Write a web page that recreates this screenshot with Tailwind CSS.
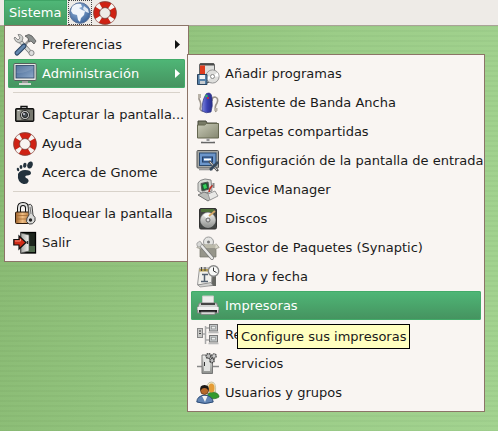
<!DOCTYPE html>
<html lang="es">
<head>
<meta charset="utf-8">
<meta name="viewport" content="width=device-width, initial-scale=1">
<title>Menú Sistema</title>
<script src="https://cdn.jsdelivr.net/npm/@tailwindcss/browser@4"></script>
</head>
<body class="min-h-screen overflow-hidden bg-[repeating-linear-gradient(180deg,rgba(0,40,0,0.03)_0px,rgba(0,40,0,0.03)_2px,transparent_2px,transparent_5px),linear-gradient(100deg,#88b972_0%,#9ccd88_60%,#a3d390_100%)] font-['DejaVu_Sans',sans-serif] text-[13px] leading-4 text-[#1a1a1a]">
<svg class="absolute size-0" aria-hidden="true">
  <defs>
    <linearGradient id="metal" x1="0" y1="0" x2="0" y2="1"><stop offset="0" stop-color="#f4f4f2"/><stop offset="1" stop-color="#8d8f8c"/></linearGradient>
    <linearGradient id="screen" x1="0" y1="0" x2="1" y2="1"><stop offset="0" stop-color="#3f6290"/><stop offset="1" stop-color="#8eaaca"/></linearGradient>
    <linearGradient id="gold" x1="0" y1="0" x2="1" y2="0"><stop offset="0" stop-color="#9c5f28"/><stop offset=".5" stop-color="#f0be84"/><stop offset="1" stop-color="#b0763b"/></linearGradient>
    <linearGradient id="folder" x1="0" y1="0" x2="1" y2="1"><stop offset="0" stop-color="#c9cbb8"/><stop offset="1" stop-color="#84866f"/></linearGradient>
    <linearGradient id="mouse" x1="0" y1="0" x2="1" y2="0"><stop offset="0" stop-color="#7d86dd"/><stop offset=".5" stop-color="#3a42b4"/><stop offset="1" stop-color="#262c86"/></linearGradient>
    <linearGradient id="door" x1="0" y1="0" x2="1" y2="0"><stop offset="0" stop-color="#a9aaa6"/><stop offset="1" stop-color="#f2f2ef"/></linearGradient>
    <radialGradient id="globe" cx=".4" cy=".35" r=".7"><stop offset="0" stop-color="#9cbbe0"/><stop offset="1" stop-color="#365f96"/></radialGradient>
    <symbol id="buoy" viewBox="0 0 24 24">
      <circle cx="12" cy="12" r="8.5" fill="none" stroke="#8b1a12" stroke-width="6.4"/>
      <circle cx="12" cy="12" r="8.5" fill="none" stroke="#cf2214" stroke-width="5"/>
      <circle cx="12" cy="12" r="8.5" fill="none" stroke="#f7f5f3" stroke-width="6" stroke-dasharray="3.8 9.55" stroke-dashoffset="-4.8"/>
      <circle cx="12" cy="12" r="5.400" fill="none" stroke="#8a6058" stroke-width=".7"/>
      <circle cx="12" cy="12" r="11.500" fill="none" stroke="#94665c" stroke-width=".5"/>
    </symbol>
  </defs>
</svg>

<header class="flex h-[26px] items-start border-b border-[#a9a397] bg-[#eeebe7] pl-1">
  <nav class="relative mr-px" aria-label="Panel">
    <button type="button" aria-expanded="true" class="block h-[25px] border border-b-0 border-[#3fa566] bg-linear-to-b from-[#4fb777] to-[#459a62] pr-[5px] pl-1 text-white">Sistema</button>

    <ul class="absolute top-[25px] left-0 w-[185px] border border-[#8c7467] bg-[#f9f5f2] px-[3px] py-1 whitespace-nowrap">
      <li><button type="button" class="flex h-[29px] w-full items-center gap-[5px] px-[5px]">
        <svg class="size-6 shrink-0" viewBox="0 0 24 24"><path d="M7 8 18 20" stroke="#666" stroke-width="4" stroke-linecap="round"/><path d="M7 8 18 20" stroke="#d5d7d4" stroke-width="2.600" stroke-linecap="round"/><path d="M2 4 5 7 7 5 5 1.500Q9 1 10 5 10 9 6 10 2 9 1 5Z" fill="#cfd1ce" stroke="#777" stroke-width=".8"/><circle cx="18.500" cy="20" r="2.600" fill="#ddd" stroke="#888"/><path d="M18 5 11 13" stroke="#999" stroke-width="2.400"/><path d="M11 13 4 20" stroke="#253f5d" stroke-width="5" stroke-linecap="round"/><path d="M11 13 4 20" stroke="#6487ae" stroke-width="3" stroke-linecap="round"/><path d="M12 3Q16 0 19 3L23 8 21 11 18 8 16 9 15 5Z" fill="#8b8f8e" stroke="#555" stroke-width=".8"/></svg>
        <span>Preferencias</span>
        <svg class="ml-auto h-[9px] w-[5px]" viewBox="0 0 5 9"><path d="M0 0 5 4.500 0 9Z" fill="#111"/></svg>
      </button></li>
      <li class="relative"><button type="button" aria-expanded="true" class="flex h-[29px] w-full items-center gap-[5px] rounded-xs bg-linear-to-b from-[#4fb777] to-[#45925f] px-[5px] text-white ring-1 ring-inset ring-[#43ab69]">
        <svg class="size-6 shrink-0" viewBox="0 0 24 24"><rect x=".8" y="1.500" width="22.400" height="17" rx="1.200" fill="#e6e8e4" stroke="#555f5b"/><rect x="3" y="3.500" width="18" height="12.500" fill="url(#screen)" stroke="#2b4161" stroke-width=".8"/><path d="M3.500 11Q12 12 20.500 6V4H3.500Z" fill="#fff" opacity=".12"/><path d="M9 19h6v2H9z" fill="#9a9c99"/><path d="M6 22h12" stroke="#d6d8d4" stroke-width="2"/></svg>
        <span>Administración</span>
        <svg class="ml-auto h-[9px] w-[5px]" viewBox="0 0 5 9"><path d="M0 0 5 4.500 0 9Z" fill="#fff"/></svg>
      </button>
        <ul class="absolute -top-[5px] left-[179px] w-[298px] border border-[#8c7467] bg-[#f9f5f2] px-[3px] py-1">
          <li><button type="button" class="flex h-[29px] w-full items-center gap-[5px] px-[5px]">
            <svg class="size-6 shrink-0" viewBox="0 0 24 24"><rect x="3.500" y="1.500" width="15" height="19" rx="1.500" fill="#dededc" stroke="#666"/><path d="M4 1.500h14v2H4z" fill="#4a4a4a"/><path d="M4 3.500h5v9H4z" fill="#e03b1d"/><circle cx="16.500" cy="14.500" r="6.600" fill="#dededc" stroke="#999"/><path d="m16.500 14.500 5-4a6.500 6.500 0 0 1 1 4zM16.500 14.500l-5 4a6.500 6.500 0 0 1-1-4z" fill="#fff"/><circle cx="16.500" cy="14.500" r="2" fill="#fff" stroke="#888"/><path d="M1.500 12.500h9.500v10H1.500z" fill="#5681a8" stroke="#2c4660"/><path d="M3.500 13h5.500v4H3.500z" fill="#f3f3f3"/><path d="M4 19h5v3H4z" fill="#c8ccd0"/></svg>
            <span>Añadir programas</span></button></li>
          <li><button type="button" class="flex h-[29px] w-full items-center gap-[5px] px-[5px]">
            <svg class="size-6 shrink-0" viewBox="0 0 24 24"><path d="M3 3v5q3 5 1 10 2 4 4 0M16 10q0-4 3-4 4 1 2 6-3 4-1 9" fill="none" stroke="#9b948b" stroke-width="1.600"/><path d="M2 3h3v4H2zM18.500 17h3v3h-3z" fill="#b9b2a7"/><path d="M9 5Q10 1.500 13 2 16 2.500 16 8q1 7-1 13-5 2-9-1Q6 10 9 5Z" fill="url(#mouse)" stroke="#2f367f" stroke-width=".7"/><circle cx="10.500" cy="5" r="1.200" fill="#2fbf58"/><circle cx="12" cy="7" r="1" fill="#d23"/></svg>
            <span>Asistente de Banda Ancha</span></button></li>
          <li><button type="button" class="flex h-[29px] w-full items-center gap-[5px] px-[5px]">
            <svg class="size-6 shrink-0" viewBox="0 0 24 24"><path d="M2 1h8l1 2h10v4H2z" fill="#777a65" stroke="#45473b"/><path d="M1.500 5h7l2-1.500h12V18h-21z" fill="url(#folder)" stroke="#64664f"/><path d="M12 18.500V21" stroke="#999" stroke-width="3"/><path d="M5 22.500h14" stroke="#666" stroke-width="1.600"/><path d="M7 21.500h10" stroke="#ddd"/></svg>
            <span>Carpetas compartidas</span></button></li>
          <li><button type="button" class="flex h-[29px] w-full items-center gap-[5px] px-[5px]">
            <svg class="size-6 shrink-0" viewBox="0 0 24 24"><rect x="1" y="1.500" width="21.500" height="17.500" rx="1" fill="#a6a8a5" stroke="#555"/><rect x="3.500" y="4" width="16.500" height="12.500" fill="#6c96cb" stroke="#29496f"/><rect x="6.500" y="8" width="10" height="5" fill="#4674b0" stroke="#243f66"/><path d="M8 10.500h7" stroke="#fff" stroke-width="2"/><path d="M3 20.500h14" stroke="#999" stroke-width="1.600"/><path d="m13 12 9 10" stroke="#555" stroke-width="2.600"/><path d="m14 13 7 8" stroke="#ddd"/><path d="m22 13-8 8" stroke="#36495c" stroke-width="2.500"/></svg>
            <span>Configuración de la pantalla de entrada</span></button></li>
          <li><button type="button" class="flex h-[29px] w-full items-center gap-[5px] px-[5px]">
            <svg class="size-6 shrink-0" viewBox="0 0 24 24"><path d="M2 5Q3 2 9 1l6 1 1 11-9 3-5-3Z" fill="#d6d8d4" stroke="#888"/><path d="M5 5.500 12 4l1 7-7 2Z" fill="#1f5b34" stroke="#555"/><path d="m7 7 3-1 1 4-3 1z" fill="#36d25c"/><path d="M2 17 8 14l11 4-7 5Z" fill="#bbbdb9" stroke="#777"/><path d="m12 16 7-3 3 5-8 4z" fill="#e8e8e6" stroke="#999"/><path d="M13 14q1-6 5-7" fill="none" stroke="#c52c20" stroke-width="1.500"/><path d="M17.500 5v5" stroke="#888" stroke-width="2"/></svg>
            <span>Device Manager</span></button></li>
          <li><button type="button" class="flex h-[29px] w-full items-center gap-[5px] px-[5px]">
            <svg class="size-6 shrink-0" viewBox="0 0 24 24"><rect x="3.500" y="1.500" width="17" height="20.500" rx="1.500" fill="#444745" stroke="#333"/><path d="M5 2h13v3H5z" fill="#4d7039"/><circle cx="12" cy="13" r="7.500" fill="url(#metal)" stroke="#aaa" stroke-width=".6"/><path d="m12 13-5-5q4-3 8-1z" fill="#fff" opacity=".8"/><circle cx="12" cy="13" r="2" fill="#ddd" stroke="#666"/><path d="M19 4 13 9" stroke="#d4a868" stroke-width="1.800"/></svg>
            <span>Discos</span></button></li>
          <li><button type="button" class="flex h-[29px] w-full items-center gap-[5px] px-[5px]">
            <svg class="size-6 shrink-0" viewBox="0 0 24 24"><circle cx="12.500" cy="6" r="5" fill="#e4e4e2" stroke="#999"/><circle cx="12.500" cy="6" r="1.500" fill="#777"/><path d="M4 9h16v12H4z" fill="#96958a" stroke="#77766c" stroke-width=".7"/><path d="M4 8.500h16V12H4z" fill="#bbb9aa"/><path d="M4 7.500.8 11.500 5 13M20 7.500l3.200 4L19 13" fill="#dad8ca" stroke="#98968a" stroke-width=".8"/><path d="m4 8 12 14" stroke="#777" stroke-width="3.800" stroke-linecap="round"/><path d="m4 8 12 14" stroke="#e9e9e7" stroke-width="2.500" stroke-linecap="round"/><path d="M1 7 4 5 6 8 4 11Q0 11 1 7Z" fill="#d8d8d6" stroke="#888" stroke-width=".6"/></svg>
            <span>Gestor de Paquetes (Synaptic)</span></button></li>
          <li><button type="button" class="flex h-[29px] w-full items-center gap-[5px] px-[5px]">
            <svg class="size-6 shrink-0" viewBox="0 0 24 24"><path d="M6 4h14v17H9z" fill="#666762"/><path d="M3.500 3h13l-1 15-14 2Z" fill="#f2f1ec" stroke="#999"/><path d="M3.500 4h12v2.500h-12z" fill="#b59c4d"/><path d="M5.500 2v4M9 2v4" stroke="#444"/><path d="M6 9.500h6M8.500 10v6M5 16.500h7" stroke="#536170" stroke-width="1.500"/><path d="M2 20 15 17.500l2 3L4 22Z" fill="#d4d4d2" stroke="#777" stroke-width=".6"/><circle cx="17.500" cy="6" r="5.200" fill="#f8f8f7" stroke="#888" stroke-width="1.400"/><path d="M17.500 2.500V6l3 1.500" fill="none" stroke="#333"/></svg>
            <span>Hora y fecha</span></button></li>
          <li class="relative"><button type="button" aria-describedby="tip" class="flex h-[29px] w-full items-center gap-[5px] rounded-xs bg-linear-to-b from-[#4fb777] to-[#45925f] px-[5px] text-white ring-1 ring-inset ring-[#43ab69]">
            <svg class="size-6 shrink-0" viewBox="0 0 24 24"><path d="M6.500 2h11v9h-11z" fill="#ededeb" stroke="#c9c9c7"/><path d="M3.500 9h17l2 5v5h-21v-5z" fill="#cfd1cf" stroke="#888"/><path d="M5 9h14v2H5z" fill="#444"/><path d="M1.500 13h21v3h-21z" fill="#f1f1f0"/><path d="M3 16h18v2.500H3z" fill="#222"/><path d="M5 18h14v2.500H5z" fill="#d5d7d5" stroke="#777" stroke-width=".7"/></svg>
            <span>Impresoras</span></button>
            <div id="tip" role="tooltip" class="absolute top-[33px] left-[46px] z-10 border border-black bg-[#ffffbf] px-[3px] pt-1 pb-[3px] text-[#1a1a1a]">Configure sus impresoras</div>
          </li>
          <li><button type="button" class="flex h-[29px] w-full items-center gap-[5px] px-[5px]">
            <svg class="size-6 shrink-0" viewBox="0 0 24 24"><path d="M7 11h3M9.500 3v18M10 5h3M10 17h3" stroke="#aaa" stroke-width="1.500"/><rect x="1.500" y="5.500" width="5" height="9" fill="#c8c8c6" stroke="#888"/><path d="M3 8h2M3 10.500h2" stroke="#444"/><rect x="13.500" y="1.500" width="8" height="6.500" fill="#c0c5c6" stroke="#777"/><rect x="15.500" y="3.300" width="4" height="2.600" fill="#e9eeee" stroke="#888" stroke-width=".6"/><path d="M12.500 9.500h10" stroke="#bbb" stroke-width="1.600"/><rect x="13.500" y="12.500" width="8" height="6.500" fill="#c0c5c6" stroke="#777"/><rect x="15.500" y="14.300" width="4" height="2.600" fill="#e9eeee" stroke="#888" stroke-width=".6"/><path d="M12.500 20.500h10" stroke="#bbb" stroke-width="1.600"/></svg>
            <span>Redes</span></button></li>
          <li><button type="button" class="flex h-[29px] w-full items-center gap-[5px] px-[5px]">
            <svg class="size-6 shrink-0" viewBox="0 0 24 24"><path d="M1 14.500h22" stroke="#888" stroke-width="1.500"/><path d="M6 3h10.500v18.500H6z" fill="url(#metal)" stroke="#777"/><path d="M8 5h6v14H8z" fill="#e2e3e1"/><path d="M8.500 10v4" stroke="#333"/><circle cx="12.500" cy="4" r="2.400" fill="#bbb" stroke="#444" stroke-width="1.400" stroke-dasharray="1.500 .6"/><circle cx="18" cy="4" r="2.200" fill="#ccc" stroke="#555" stroke-width="1.300" stroke-dasharray="1.500 .6"/><circle cx="16" cy="8.500" r="2.200" fill="#bbb" stroke="#444" stroke-width="1.400" stroke-dasharray="1.500 .6"/></svg>
            <span>Servicios</span></button></li>
          <li><button type="button" class="flex h-[29px] w-full items-center gap-[5px] px-[5px]">
            <svg class="size-6 shrink-0" viewBox="0 0 24 24"><path d="M11 17q0-6 6-6 6 1 6 5-4 3-12 1z" fill="#349a2c" stroke="#1c6418" stroke-width=".7"/><path d="M11.500 10Q10 1 15.500 1q5 0 4 10z" fill="#efe8c8" stroke="#aaa27f" stroke-width=".6"/><ellipse cx="15.500" cy="7" rx="3" ry="4.500" fill="#e59c36"/><path d="M.8 21Q1 15 8.500 14q8 1 8.700 7-8 3-16.400 0z" fill="#6285b4" stroke="#2d4c77"/><path d="m6 15 3 6 2.500-6z" fill="#f3f3f3"/><circle cx="8.500" cy="9.500" r="4" fill="#b8692a" stroke="#3c2411" stroke-width=".6"/><path d="M4.500 10Q3 4 8.500 4q5.500 0 4 6-1-3-4-3-3 0-4 3z" fill="#1c1815"/></svg>
            <span>Usuarios y grupos</span></button></li>
        </ul>
      </li>
      <li role="separator" class="h-3 px-[5px] pt-1"><div class="border-t border-[#d8d2ca]"></div></li>
      <li><button type="button" class="flex h-[29px] w-full items-center gap-[5px] px-[5px]">
        <svg class="size-6 shrink-0" viewBox="0 0 24 24"><path d="M8 6V3.500h6V6" fill="#ddd" stroke="#111" stroke-width="1.400"/><rect x="2.700" y="5.700" width="18" height="12.600" rx="1" fill="#77786f" stroke="#111" stroke-width="1.400"/><path d="M4 7h4v10H4z" fill="#9a9b92"/><circle cx="12" cy="12" r="4.600" fill="#b9bbb9" stroke="#333"/><circle cx="12" cy="12" r="2.600" fill="#4a5357" stroke="#222"/><circle cx="11" cy="11" r="1" fill="#ccd"/><path d="M4.500 7.500h2" stroke="#eee"/></svg>
        <span>Capturar la pantalla...</span></button></li>
      <li><button type="button" class="flex h-[29px] w-full items-center gap-[5px] px-[5px]">
        <svg class="size-6 shrink-0"><use href="#buoy"/></svg>
        <span>Ayuda</span></button></li>
      <li><button type="button" class="flex h-[29px] w-full items-center gap-[5px] px-[5px]">
        <svg class="size-6 shrink-0" viewBox="0 0 24 24" fill="#23323d"><ellipse cx="17" cy="4" rx="2.600" ry="3.600" transform="rotate(20 17 4)"/><ellipse cx="11.800" cy="4.300" rx="1.700" ry="2.500" transform="rotate(10 11.800 4.300)"/><ellipse cx="8" cy="6" rx="1.400" ry="2.100"/><ellipse cx="5" cy="8.500" rx="1.200" ry="1.800" transform="rotate(-15 5 8.500)"/><path d="M5 13Q7 9 12 9q6 0 6 3 0 2-4 2.500-3 .5-1 2.500 3 1 2.500 3.500-1 3-5 2.500Q4 21 5 13Z"/></svg>
        <span>Acerca de Gnome</span></button></li>
      <li role="separator" class="h-3 px-[5px] pt-1"><div class="border-t border-[#d8d2ca]"></div></li>
      <li><button type="button" class="flex h-[29px] w-full items-center gap-[5px] px-[5px]">
        <svg class="size-6 shrink-0" viewBox="0 0 24 24"><path d="M6 11V6q0-4 4-4t4 4v5" fill="none" stroke="#111" stroke-width="4"/><path d="M6 11V6q0-4 4-4t4 4v5" fill="none" stroke="#e1e1df" stroke-width="2"/><rect x="2.500" y="10" width="14" height="11.500" rx="1" fill="url(#gold)" stroke="#2b1a0c"/><path d="M3 13.500h13M3 17h13" stroke="#a56c34" stroke-width=".8"/><path d="M15 3q3-2 4 1l1 9q3 2 2 6-2 4-6 3-4-2-2-6l2-3z" fill="#d9d9d7" stroke="#444"/><circle cx="17.500" cy="18" r="1.700" fill="#222"/><path d="m17 5 1 7" stroke="#777"/></svg>
        <span>Bloquear la pantalla</span></button></li>
      <li><button type="button" class="flex h-[29px] w-full items-center gap-[5px] px-[5px]">
        <svg class="size-6 shrink-0" viewBox="0 0 24 24"><rect x="8" y="1.500" width="14.500" height="20.500" fill="#1d251d" stroke="#000" stroke-width="1.300"/><path d="M9 15h13v6H9z" fill="#4d674a"/><path d="M8 2 16 4v16l-8 2z" fill="url(#door)" stroke="#555" stroke-width=".7"/><path d="M14.500 10v3" stroke="#333" stroke-width="1.500"/><path d="M.8 8.500H6V5l7 6.500L6 18v-4H.8z" fill="#d12b17" stroke="#111" stroke-width="1.200"/><path d="M2 10h5.500V8" fill="none" stroke="#f79380"/></svg>
        <span>Salir</span></button></li>
    </ul>
  </nav>
  <button type="button" aria-label="Navegador web" class="flex h-[25px] w-6 items-center justify-center border border-dotted border-[#444]">
    <svg class="size-[22px] shrink-0" viewBox="0 0 22 22"><circle cx="11" cy="11" r="10.300" fill="url(#globe)" stroke="#5b7299"/><path d="M5 3q4-2 7-1l1 3-3 1 3 2 3 1-1 4-3 3-1 4-2-2-1-5-4-1-2-3 1-4z" fill="#f1f5fa"/><path d="m15 4 4 3 1 4-3-1-3-3z" fill="#e1e9f3"/></svg>
  </button>
  <button type="button" aria-label="Ayuda" class="flex h-[25px] w-[26px] items-center justify-center">
    <svg class="size-6 shrink-0"><use href="#buoy"/></svg>
  </button>
</header>
</body>
</html>
